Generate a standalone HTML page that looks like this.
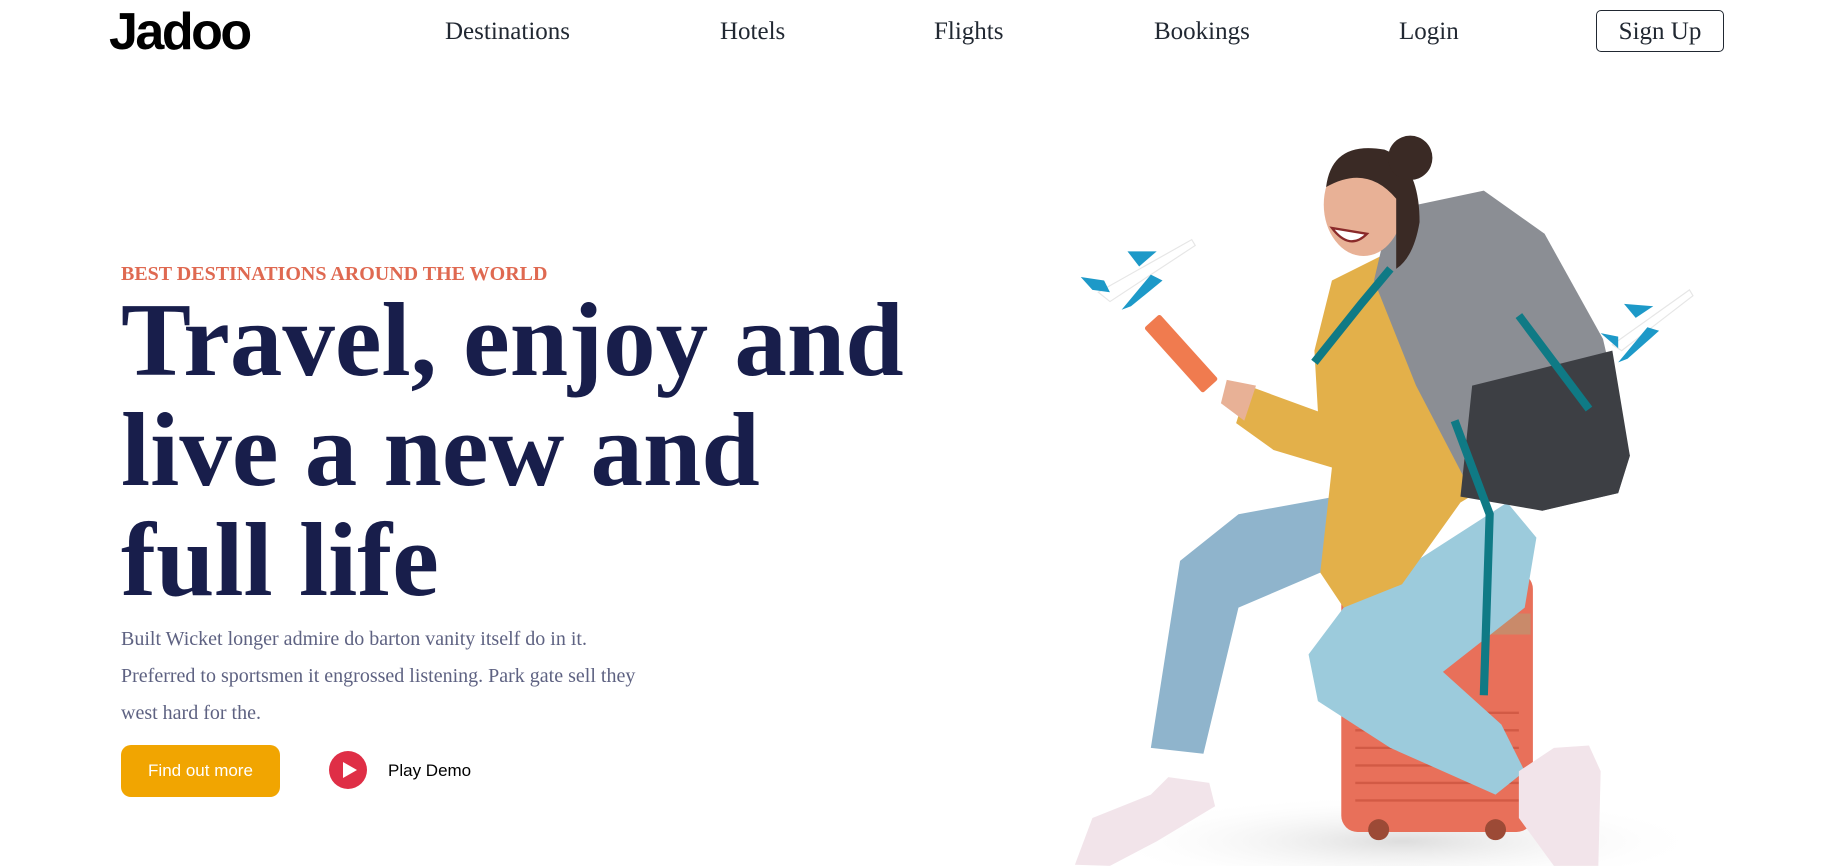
<!DOCTYPE html>
<html><head><meta charset="utf-8"><style>
*{margin:0;padding:0;box-sizing:border-box}
body{width:1832px;height:866px;background:#fff;position:relative;overflow:hidden;font-family:"Liberation Serif",serif}
.a{position:absolute;white-space:nowrap}
.nav{font-size:25px;color:#212832;top:18px}
.logo{font-family:"Liberation Sans",sans-serif;font-weight:bold;font-size:52px;letter-spacing:-2.5px;left:109px;top:2px;color:#000}
.signup{left:1596px;top:10px;width:128px;height:42px;border:1.5px solid #212832;border-radius:5px;font-size:25px;text-align:center;line-height:42px}
.sub{left:121px;top:263px;font-size:20px;font-weight:bold;color:#df6951}
h1{position:absolute;left:121px;top:285px;font-size:105px;line-height:110px;font-weight:bold;color:#181e4b;white-space:nowrap}
.p{left:121px;top:621px;font-size:20px;line-height:37px;color:#5e6282}
.btn{left:121px;top:745px;width:159px;height:52px;background:#f1a501;border-radius:10px;color:#fff;font-family:"Liberation Sans",sans-serif;font-size:17px;text-align:center;line-height:52px}
.play{left:329px;top:751px;width:38px;height:38px;border-radius:50%;background:#df2e46}
.play:after{content:"";position:absolute;left:14px;top:11px;border-left:14px solid #fff;border-top:8px solid transparent;border-bottom:8px solid transparent}
.pd{left:388px;top:761px;font-family:"Liberation Sans",sans-serif;font-size:17px;color:#000}
</style></head><body>
<div class="a logo">Jadoo</div>
<div class="a nav" style="left:445px">Destinations</div>
<div class="a nav" style="left:720px">Hotels</div>
<div class="a nav" style="left:934px">Flights</div>
<div class="a nav" style="left:1154px">Bookings</div>
<div class="a nav" style="left:1399px">Login</div>
<div class="a nav signup">Sign Up</div>
<div class="a sub">BEST DESTINATIONS AROUND THE WORLD</div>
<h1>Travel, enjoy and<br>live a new and<br>full life</h1>
<div class="a p">Built Wicket longer admire do barton vanity itself do in it.<br>Preferred to sportsmen it engrossed listening. Park gate sell they<br>west hard for the.</div>
<div class="a btn">Find out more</div>
<div class="a play"></div>
<div class="a pd">Play Demo</div>
<svg class="a" style="left:0;top:0" width="1832" height="866" viewBox="0 0 1568 741">
<defs><radialGradient id="sh" cx="0.5" cy="0.5" r="0.5"><stop offset="0" stop-color="#ddd"/><stop offset="1" stop-color="#fff" stop-opacity="0"/></radialGradient></defs>
<ellipse cx="1200" cy="720" rx="260" ry="40" fill="url(#sh)"/>
<rect x="1148" y="490" width="164" height="222" rx="14" fill="#e8705a"/>
<g stroke="#d25a45" stroke-width="2"><line x1="1160" y1="610" x2="1300" y2="610"/><line x1="1160" y1="625" x2="1300" y2="625"/><line x1="1160" y1="640" x2="1300" y2="640"/><line x1="1160" y1="655" x2="1300" y2="655"/><line x1="1160" y1="670" x2="1300" y2="670"/><line x1="1160" y1="685" x2="1300" y2="685"/></g>
<rect x="1275" y="525" width="35" height="18" fill="#c98a6a"/>
<circle cx="1180" cy="710" r="9" fill="#9c4a36"/><circle cx="1280" cy="710" r="9" fill="#9c4a36"/>
<path d="M1170 420 L1230 410 L1210 460 L1130 490 L1060 520 L1030 645 L985 640 L1010 480 L1060 440 Z" fill="#8fb4cc"/>
<path d="M1150 520 L1290 430 L1315 460 L1305 520 L1235 575 L1285 620 L1305 660 L1280 680 L1190 640 L1128 600 L1120 560 Z" fill="#9ccbdc"/>
<path d="M1140 240 L1200 210 L1232 260 L1262 340 L1300 400 L1250 430 L1200 500 L1150 520 L1130 490 L1140 400 L1090 385 L1058 362 L1068 330 L1128 352 L1125 300 Z" fill="#e3b04a"/>
<path d="M1190 180 L1270 163 L1322 200 L1372 290 L1395 390 L1385 422 L1320 437 L1260 422 L1212 330 L1176 240 Z" fill="#8b8e94"/>
<path d="M1260 330 L1380 300 L1395 390 L1385 422 L1320 437 L1250 425 Z" fill="#3d3f44"/>
<g stroke="#0f7a85" stroke-width="7" fill="none"><path d="M1245 360 L1275 440 L1270 595"/><path d="M1190 230 L1165 260 L1125 310"/><path d="M1300 270 L1360 350"/></g>
<path d="M1050 325 L1045 345 L1065 360 L1075 330 Z" fill="#e8b196"/>
<rect x="975" y="292" width="75" height="18" rx="2" fill="#f07b4f" transform="rotate(48 1010 300)"/>
<ellipse cx="1167" cy="175" rx="34" ry="44" fill="#e8b196"/>
<path d="M1135 160 Q1140 120 1185 128 Q1215 140 1215 190 Q1210 220 1195 230 L1195 170 Q1170 140 1135 160 Z" fill="#3a2a25"/>
<circle cx="1207" cy="135" r="19" fill="#3a2a25"/>
<path d="M1140 195 Q1155 215 1170 200 Z" fill="#fff" stroke="#8a2a2a" stroke-width="2"/>
<path d="M920 740 L935 700 L985 680 L1000 665 L1035 670 L1040 690 L990 720 L950 741 Z" fill="#f2e4ea"/>
<path d="M1300 660 L1330 640 L1360 638 L1370 660 L1368 741 L1330 741 L1300 700 Z" fill="#f2e4ea"/>
<g fill="#fff" stroke="#e6e6e6"><path d="M940 250 L1020 205 L1023 210 L950 258 Z"/><path d="M1380 295 L1446 248 L1449 253 L1388 300 Z"/></g>
<g fill="#1d99c8"><path d="M925 237 L945 240 L950 250 L935 248 Z"/><path d="M965 215 L990 215 L975 228 Z"/><path d="M985 235 L960 265 L968 262 L995 240 Z"/><path d="M1390 260 L1415 262 L1400 272 Z"/><path d="M1410 280 L1385 310 L1393 307 L1420 283 Z"/><path d="M1370 285 L1385 288 L1385 298 Z"/></g>
</svg>
</body></html>
